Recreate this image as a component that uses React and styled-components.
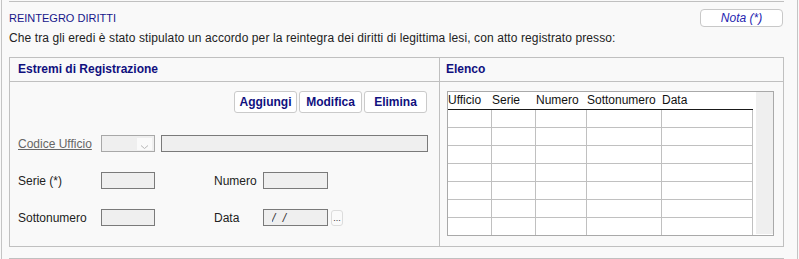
import React from 'react';
import styled, { createGlobalStyle } from 'styled-components';

const GlobalStyle = createGlobalStyle`
    body {
        margin: 0;
        background: #f9f9f9;
        font-family: "Liberation Sans", Arial, sans-serif;
        font-size: 12px;
        color: #222;
    }
`;

const Frame = styled.div`
    box-sizing: border-box;
    width: 797px;
    height: 259px;
    margin-left: 1px;
    padding: 0 13px 0 7px;
    border-left: 1px solid #c4c4c4;
    border-right: 1px solid #c4c4c4;
    overflow: hidden;
`;

const Section = styled.div`
    margin-top: ${ props => props.first ? '1px' : '0' };
    padding: 7px 0 11px;
    border-top: 1px solid #c0c0c0;
`;

const SectionHead = styled.div`
    display: flex;
    align-items: center;
    justify-content: space-between;
    height: 18px;
`;

const Title = styled.div`
    font-size: 11px;
    color: #16168a;
`;

const NotaButton = styled.button`
    box-sizing: border-box;
    width: 83px;
    height: 18px;
    margin-right: 1px;
    padding: 0;
    background: #fff;
    border: 1px solid #c8c8c8;
    border-radius: 4px;
    font-family: inherit;
    font-size: 12px;
    font-style: italic;
    color: #2424b0;
`;

const Intro = styled.p`
    margin: 4px 0 12px;
    line-height: 14px;
    letter-spacing: 0.1px;
    color: #222;
`;

const Boxes = styled.div`
    box-sizing: border-box;
    display: grid;
    grid-template-columns: 429px 1fr;
    height: 190px;
    border: 1px solid #c0c0c0;
`;

const Panel = styled.div`
    display: flex;
    flex-direction: column;
    border-left: ${ props => props.divided ? '1px solid #c0c0c0' : 'none' };
`;

const PanelHeader = styled.div`
    height: 23px;
    line-height: 23px;
    padding-left: ${ props => props.indent }px;
    border-bottom: 1px solid #c0c0c0;
    font-weight: bold;
    color: #10107e;
`;

const PanelBody = styled.div`
    padding: ${ props => props.pad };
`;

const Toolbar = styled.div`
    display: flex;
    justify-content: flex-end;
    gap: 2px;
`;

const ActionButton = styled.button`
    box-sizing: border-box;
    width: 63px;
    height: 22px;
    padding: 0;
    background: #fff;
    border: 1px solid #cacaca;
    border-radius: 3px;
    font-family: inherit;
    font-size: 12px;
    font-weight: bold;
    color: #10107e;
`;

const Form = styled.div`
    display: flex;
    flex-direction: column;
    gap: 20px;
    margin-top: 22px;
`;

const FieldRow = styled.div`
    display: flex;
    align-items: center;
    height: 17px;
`;

const Label = styled.span`
    flex: none;
    width: ${ props => props.width }px;
    color: ${ props => props.link ? '#666' : '#222' };
    text-decoration: ${ props => props.link ? 'underline' : 'none' };
`;

const Spacer = styled.span`
    flex: none;
    width: ${ props => props.width }px;
`;

const Input = styled.input`
    box-sizing: border-box;
    flex: none;
    width: ${ props => props.width }px;
    height: 17px;
    margin: 0 0 0 ${ props => props.offset || 0 }px;
    padding: 0 0 0 8px;
    background: #efefef;
    border: 1px solid #7a7a7a;
    font-family: inherit;
    font-size: 12px;
    font-style: italic;
    letter-spacing: 2px;
    color: #333;
    outline: none;
`;

const Select = styled.div`
    box-sizing: border-box;
    flex: none;
    display: flex;
    justify-content: flex-end;
    align-items: center;
    width: 54px;
    height: 17px;
    padding-right: 2px;
    background: #efefef;
    border: 1px solid #a8a8a8;
`;

const SelectArrow = styled.span`
    display: flex;
    align-items: flex-end;
    justify-content: center;
    width: 15px;
    height: 12px;
    background: #fafafa;
`;

const PickerButton = styled.button`
    box-sizing: border-box;
    flex: none;
    width: 12px;
    height: 16px;
    margin-left: 3px;
    padding: 0 0 2px;
    background: #fafafa;
    border: 1px solid #dcdcdc;
    border-radius: 3px;
    font-family: inherit;
    font-size: 9px;
    line-height: 1;
    color: #333;
    display: flex;
    align-items: flex-end;
    justify-content: center;
`;

const GridFrame = styled.div`
    box-sizing: border-box;
    display: flex;
    height: 145px;
    background: #fff;
    border: 1px solid #a9a9a9;
`;

const Grid = styled.div`
    display: grid;
    grid-template-columns: 44px 44px 51px 75px 91px;
    grid-template-rows: 18px repeat(6, 18px) 17px;
    width: 305px;
`;

const HeadCell = styled.div`
    box-sizing: border-box;
    line-height: 17px;
    border-bottom: 1px solid #1a1a1a;
    color: #111;
    white-space: nowrap;
`;

const Cell = styled.div`
    box-sizing: border-box;
    border-right: 1px solid #c0c0c0;
    border-bottom: ${ props => props.last ? 'none' : '1px solid #c0c0c0' };
`;

const ScrollTrack = styled.div`
    width: 17px;
    margin: 0 0 1px 3px;
    background: #efefef;
`;

const columns = [ 'Ufficio', 'Serie', 'Numero', 'Sottonumero', 'Data' ];
const rows = [ 0, 1, 2, 3, 4, 5, 6 ];

const Chevron = () => (
    <svg width="9" height="6" viewBox="0 0 9 6">
        <path d="M1 1.5 L4.5 4.5 L8 1.5" fill="none" stroke="#b8b8b8" strokeWidth="1"/>
    </svg>
);

const App = () => (
    <>
        <GlobalStyle/>
        <Frame>
            <Section first>
                <SectionHead>
                    <Title>REINTEGRO DIRITTI</Title>
                    <NotaButton>Nota (*)</NotaButton>
                </SectionHead>
                <Intro>
                    Che tra gli eredi è stato stipulato un accordo per la reintegra dei diritti di legittima lesi, con atto registrato presso:
                </Intro>
                <Boxes>
                    <Panel>
                        <PanelHeader indent={ 8 }>Estremi di Registrazione</PanelHeader>
                        <PanelBody pad="9px 12px 0 8px">
                            <Toolbar>
                                <ActionButton>Aggiungi</ActionButton>
                                <ActionButton>Modifica</ActionButton>
                                <ActionButton>Elimina</ActionButton>
                            </Toolbar>
                            <Form>
                                <FieldRow>
                                    <Label width={ 83 } link>Codice Ufficio</Label>
                                    <Select>
                                        <SelectArrow><Chevron/></SelectArrow>
                                    </Select>
                                    <Input width={ 267 } offset={ 6 } readOnly/>
                                </FieldRow>
                                <FieldRow>
                                    <Label width={ 83 }>Serie (*)</Label>
                                    <Input width={ 54 } readOnly/>
                                    <Spacer width={ 59 }/>
                                    <Label width={ 49 }>Numero</Label>
                                    <Input width={ 65 } readOnly/>
                                </FieldRow>
                                <FieldRow>
                                    <Label width={ 83 }>Sottonumero</Label>
                                    <Input width={ 54 } readOnly/>
                                    <Spacer width={ 59 }/>
                                    <Label width={ 49 }>Data</Label>
                                    <Input width={ 65 } readOnly value="/ /"/>
                                    <PickerButton>...</PickerButton>
                                </FieldRow>
                            </Form>
                        </PanelBody>
                    </Panel>
                    <Panel divided>
                        <PanelHeader indent={ 6 }>Elenco</PanelHeader>
                        <PanelBody pad="9px 10px 0 7px">
                            <GridFrame>
                                <Grid>
                                    { columns.map( c => <HeadCell key={ c }>{ c }</HeadCell> ) }
                                    { rows.map( r => columns.map( c => (
                                        <Cell key={ r + c } last={ r === rows.length - 1 }/>
                                    ) ) ) }
                                </Grid>
                                <ScrollTrack/>
                            </GridFrame>
                        </PanelBody>
                    </Panel>
                </Boxes>
            </Section>
            <Section/>
        </Frame>
    </>
);

export default App;
